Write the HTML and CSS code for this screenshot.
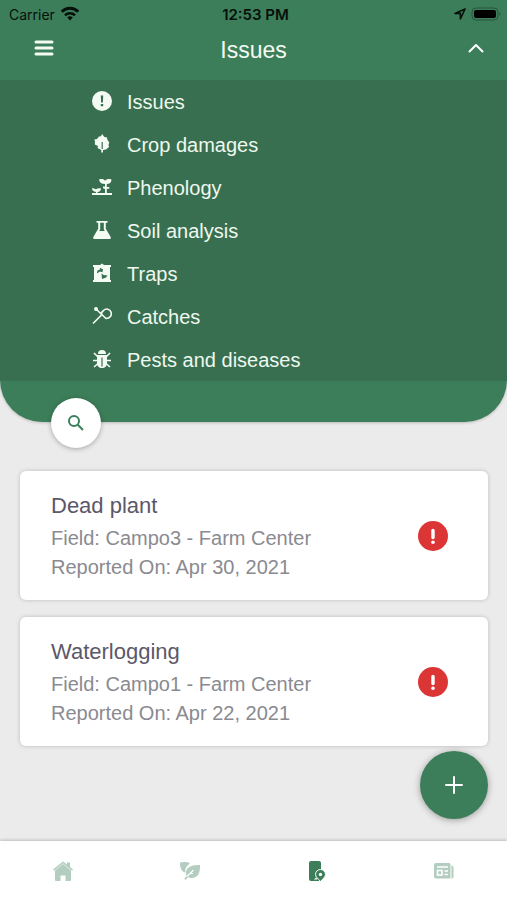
FILE: index.html
```html
<!DOCTYPE html>
<html lang="en">
<head>
    <meta charset="UTF-8">
    <meta name="viewport" content="width=device-width, initial-scale=1.0">
    <title>Issues</title>
    <link rel="stylesheet" href="styles.css">
</head>
<body>
    <header class="header">
        <div class="status">
            <div class="status-left">
                <span>Carrier</span>
                <svg width="20" height="16" viewBox="0 0 20 16" fill="none" stroke="#06100a" stroke-width="3">
                    <path d="M1.8 5.8a11.5 11.5 0 0 1 16.4 0"/>
                    <path d="M5 9.4a7 7 0 0 1 10 0" stroke-width="2.6"/>
                    <path d="M10 14.5L7.2 11.5a4 4 0 0 1 5.6 0z" fill="#06100a" stroke="none"/>
                </svg>
            </div>
            <strong>12:53 PM</strong>
            <div class="status-right">
                <svg width="12" height="12" viewBox="0 0 12 12" fill="none" stroke="#06100a" stroke-width="1.6" stroke-linejoin="round">
                    <path d="M11 1L1 5.4h5.4V11z"/>
                </svg>
                <svg width="31" height="14" viewBox="0 0 31 14">
                    <rect x="1" y="1" width="26" height="12" rx="4" fill="none" stroke="#29543c"/>
                    <rect x="3" y="3" width="22" height="8" rx="2" fill="#000"/>
                    <path d="M28.5 5v4q2-2 0-4z" fill="#29543c"/>
                </svg>
            </div>
        </div>
        <div class="toolbar">
            <button class="icon-button" aria-label="Menu">
                <svg width="20" height="18" viewBox="0 0 20 18" stroke="#f3fbf3" stroke-width="3" stroke-linecap="round">
                    <path d="M2 3h16M2 9h16M2 15h16"/>
                </svg>
            </button>
            <h1>Issues</h1>
            <button class="icon-button" aria-label="Close list">
                <svg width="18" height="18" viewBox="0 0 18 18" fill="none" stroke="#fff" stroke-width="2" stroke-linecap="round" stroke-linejoin="round">
                    <path d="M2.5 12.5L9 6l6.5 6.5"/>
                </svg>
            </button>
        </div>
        <nav class="menu">
            <a href="#issues">
                <svg viewBox="0 0 20 20"><circle cx="10" cy="10" r="10"/><path class="cut" d="M8.800 4.500h2.400l-.3 7H9.100zM8.800 13h2.400v2.200H8.800z"/></svg>
                Issues
            </a>
            <a href="#damages">
                <svg viewBox="0 0 20 20"><path d="M10 0l2.500 3 2.500.5.500 2.500 1.800 2.500-.8 2 .5 2.500-3 2.500-3 .5v2.500H9.300V16L5.500 14l.5-2-3.200-1.500L3 7.500 2.300 5.500 5 5l2-2.500 2-.2z"/><path class="line" d="M10.200 8v7"/></svg>
                Crop damages
            </a>
            <a href="#phenology">
                <svg viewBox="0 0 20 20"><path d="M0 16h20v2H0zM0 11.500c1.500-.5 2.500.5 4 .8 1.500-1 3-1.300 5-.8 0 2-1.500 3.500-3.500 3.500v1.500H4V15c-2.500-.5-4-1.500-4-3.500zM7 2.500c3-1 5-.3 6 1.200 1.500-1.500 3.500-2 6.500-1.200 0 3-2 4.500-4.700 4.500v3h2.500v1.800h-2.500V17H13v-5l-2-.8V9.500h2V7C9.500 7 7.500 5.500 7 2.500z"/></svg>
                Phenology
            </a>
            <a href="#soil">
                <svg viewBox="0 0 20 20"><path d="M4.500 1h11v1.800h-1.700v6L18.700 17q.8 2-1 2H2.300q-1.800 0-1-2l4.900-8.200v-6H4.500z"/><path class="cut" d="M8.200 2.800h3.600v6.500l1 1.700H7.200l1-1.700z"/></svg>
                Soil analysis
            </a>
            <a href="#traps">
                <svg viewBox="0 0 20 20"><path d="M1 2h7l2-1.500L12 2h7v2h-1v13h1v2H1v-2h1V4H1z"/><path class="cut" d="M8 5l3 1.200-.6 3L8 8.500l-3 2 .5-3.200L7.500 7zM9.500 10.500l2 1.500 4 .5-1.500 2-4 1.500z"/></svg>
                Traps
            </a>
            <a href="#catches">
                <svg viewBox="0 0 20 20"><circle cx="4" cy="3" r="2"/><path class="stroke" d="M1 17.500l8.500-8.500M4.500 3.500l9.500 9c4 0 6-3 5-6.500-1-3-5-4-7.500-1.500C9.500 6 9 8 9.500 9.500"/></svg>
                Catches
            </a>
            <a href="#pests">
                <svg viewBox="0 0 20 20"><path d="M6 5a4 4 0 0 1 8 0zM5 6h10v8c0 3-2 5-5 5s-5-2-5-5z"/><path class="stroke" d="M2 4l3.500 3.500M18 4l-3.500 3.500M1 11.500h4.500M19 11.500h-4.500M2 18l4-3.500M18 18l-4-3.500"/><path class="line" d="M10 8.500v9"/></svg>
                Pests and diseases
            </a>
        </nav>
        <button class="search" aria-label="Search">
            <svg width="18" height="18" viewBox="0 0 18 18" fill="none" stroke="#3d7e5a" stroke-width="2">
                <circle cx="7" cy="7" r="5"/>
                <path d="M10.8 10.8L16 16"/>
            </svg>
        </button>
    </header>

    <main class="list">
        <article class="card">
            <div>
                <h2>Dead plant</h2>
                <p>Field: Campo3 - Farm Center</p>
                <p>Reported On: Apr 30, 2021</p>
            </div>
            <svg class="alert" viewBox="0 0 30 30">
                <circle cx="15" cy="15" r="15" fill="#dc3535"/>
                <path d="M15 9.5v7" stroke="#fff" stroke-width="3.4" stroke-linecap="round"/>
                <circle cx="15" cy="21.3" r="1.800" fill="#fff"/>
            </svg>
        </article>
        <article class="card">
            <div>
                <h2>Waterlogging</h2>
                <p>Field: Campo1 - Farm Center</p>
                <p>Reported On: Apr 22, 2021</p>
            </div>
            <svg class="alert" viewBox="0 0 30 30">
                <circle cx="15" cy="15" r="15" fill="#dc3535"/>
                <path d="M15 9.5v7" stroke="#fff" stroke-width="3.4" stroke-linecap="round"/>
                <circle cx="15" cy="21.3" r="1.800" fill="#fff"/>
            </svg>
        </article>
    </main>

    <button class="add" aria-label="Add issue">
        <svg width="20" height="20" viewBox="0 0 20 20" stroke="#fff" stroke-width="2" stroke-linecap="round">
            <path d="M10 2v16M2 10h16"/>
        </svg>
    </button>

    <nav class="tabs">
        <a href="#home" aria-label="Home">
            <svg viewBox="0 0 20 20"><path d="M10 .5L14 3.500V1.500h3V6l3 2.500-1 1.200-1-.7v10q0 1-1 1h-4.500v-5.500h-5V20H3q-1 0-1-1V9l-1 .7L0 8.500z"/><path d="M2 9.200L10 2.700l8 6.500" fill="none" stroke="#fff" stroke-width=".6"/></svg>
        </a>
        <a href="#crops" aria-label="Crops">
            <svg viewBox="0 0 20 20"><path d="M0 1.500c3-.8 7-.8 9.500.5v1C6 5 5 8 5.500 11.500 1.500 11 0 7 0 1.500z"/><path d="M20 4c.3 8-2 13-8.500 13-1.500 0-2.500-.3-3.300-1L5.500 19l-1.200-1.200L6.500 15C4.500 8 9 3.500 20 4z"/><path d="M7 15.500l6.500-6.500M10 12.500h3" fill="none" stroke="#fff" stroke-width="1.2"/></svg>
        </a>
        <a class="active" href="#reports" aria-label="Reports" aria-current="page">
            <svg viewBox="0 0 20 20"><rect x="2" y="0" width="12" height="20" rx="2"/><path d="M13.500 20.500c-2.500-3-5-4.500-5-7a5 5 0 0 1 10 0c0 2.500-2.500 4-5 7z" stroke="#fff" stroke-width="1"/><circle cx="13.500" cy="13.500" r="1.700" fill="#fff"/><path d="M7 18.500l2-2 1.500 2z" fill="#fff"/></svg>
        </a>
        <a href="#news" aria-label="News">
            <svg viewBox="0 0 20 20"><path d="M2 2h13q1.500 0 1.500 1.500v14H2q-2 0-2-2V4q0-2 2-2zM17.500 4.500q2 0 2 2V16q0 1.500-2 1.500z"/><path d="M3 6h11M10.500 10H14M10.500 13.500H14" stroke="#fff" stroke-width="1.600"/><rect x="3.500" y="9.500" width="4.500" height="4.500" fill="none" stroke="#fff" stroke-width="1.600"/></svg>
        </a>
    </nav>
</body>
</html>
```
FILE: styles.css
```css
* {
    box-sizing: border-box;
}
body {
    margin: 0;
    min-height: 100vh;
    display: flex;
    flex-direction: column;
    background-color: #ebebeb;
    font-family: "Liberation Sans", Arial, sans-serif;
}
h1, h2, p {
    margin: 0;
    font-weight: normal;
}
button {
    display: flex;
    align-items: center;
    justify-content: center;
    padding: 0;
    border: none;
    background: none;
    cursor: pointer;
}
a {
    color: inherit;
    text-decoration: none;
}
.header {
    position: relative;
    padding-bottom: 41px;
    background-color: #3d7e5a;
    border-radius: 0 0 42px 42px;
    box-shadow: 0 1px 3px rgba(0, 0, 0, 0.2);
}
.status {
    display: grid;
    grid-template-columns: 1fr auto 1fr;
    align-items: center;
    height: 28px;
    padding: 0 5px 0 9px;
    font-family: Inter, sans-serif;
    font-size: 14px;
    color: #06100a;
}
.status strong {
    font-size: 15px;
    font-weight: 600;
}
.status-left, .status-right {
    display: flex;
    align-items: center;
    gap: 5px;
}
.status-right {
    justify-content: flex-end;
}
.toolbar {
    display: grid;
    grid-template-columns: 1fr auto 1fr;
    align-items: center;
    height: 52px;
    padding: 0 20px 12px;
}
.toolbar h1 {
    font-size: 23px;
    line-height: 28px;
    padding-top: 3px;
    color: #f3fbf3;
}
.icon-button {
    width: 22px;
    height: 28px;
    margin-left: 13px;
}
.toolbar .icon-button:last-child {
    justify-self: end;
}
.menu {
    background-color: #396f51;
}
.menu a {
    display: flex;
    align-items: center;
    gap: 15px;
    height: 43px;
    padding-left: 92px;
    padding-top: 2px;
    font-size: 20px;
    color: #eef8ee;
}
.menu svg {
    width: 20px;
    height: 20px;
    margin-bottom: 4px;
    fill: #f3fbf3;
}
.menu .cut {
    fill: #396f51;
}
.menu .line {
    fill: none;
    stroke: #396f51;
    stroke-width: 1.2;
}
.menu .stroke {
    fill: none;
    stroke: #f3fbf3;
    stroke-width: 1.6;
}
.search {
    position: absolute;
    left: 51px;
    bottom: -26px;
    width: 50px;
    height: 50px;
    border-radius: 50%;
    background-color: #fff;
    box-shadow: 0 1px 5px rgba(0, 0, 0, 0.3);
}
.list {
    flex: 1;
    display: flex;
    flex-direction: column;
    gap: 17px;
    padding: 49px 19px 40px 20px;
}
.card {
    display: flex;
    align-items: center;
    justify-content: space-between;
    padding: 19px 40px 18px 31px;
    border-radius: 6px;
    background-color: #fff;
    box-shadow: 0 0 4px rgba(0, 0, 0, 0.2);
}
.card h2 {
    margin-bottom: 2px;
    font-size: 22px;
    line-height: 32px;
    color: #5b5868;
}
.card p {
    font-size: 20px;
    line-height: 29px;
    color: #8a8a90;
}
.alert {
    width: 30px;
    height: 30px;
}
.add {
    position: fixed;
    right: 19px;
    bottom: 81px;
    width: 68px;
    height: 68px;
    border-radius: 50%;
    background-color: #3d7e5a;
    box-shadow: 0 1px 7px rgba(0, 0, 0, 0.35);
}
.tabs {
    position: sticky;
    bottom: 0;
    display: flex;
    height: 59px;
    background-color: #fff;
    box-shadow: 0 -1px 3px rgba(0, 0, 0, 0.2);
}
.tabs a {
    flex: 1;
    display: flex;
    align-items: center;
    justify-content: center;
}
.tabs svg {
    width: 20px;
    height: 20px;
    fill: #b3cdc0;
}
.tabs .active svg {
    fill: #3d7e5a;
}
```
